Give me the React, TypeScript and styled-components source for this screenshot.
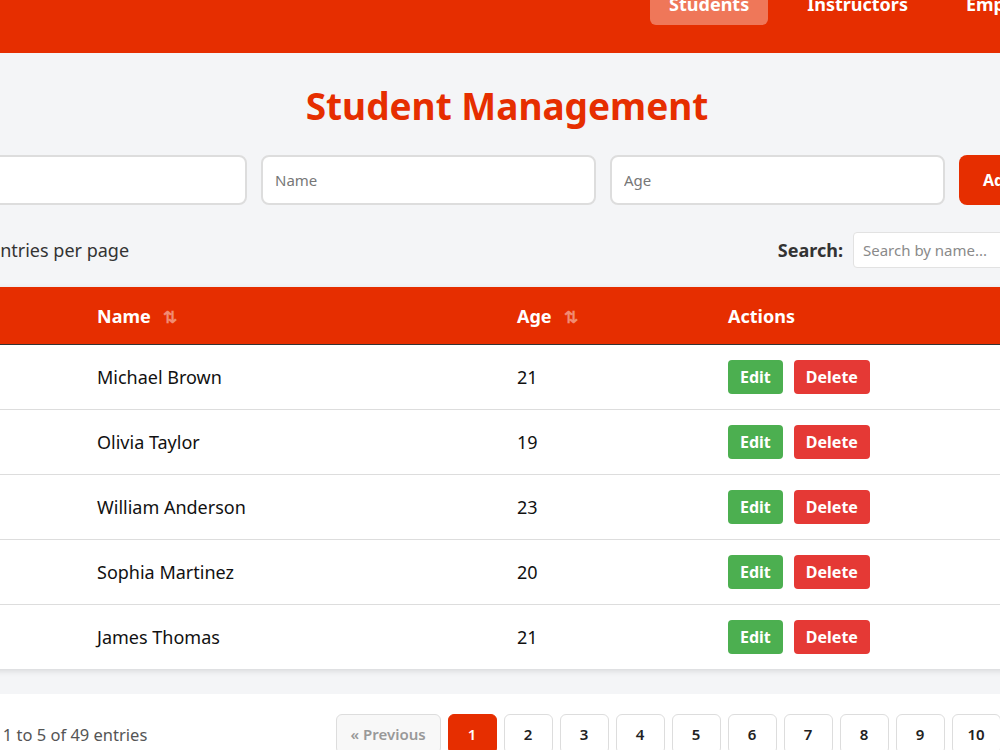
import React from 'react';
import styled, { createGlobalStyle } from 'styled-components';

const RED = '#e62e00';

const students = [
	{ id: 6, name: 'Michael Brown', age: 21 },
	{ id: 7, name: 'Olivia Taylor', age: 19 },
	{ id: 8, name: 'William Anderson', age: 23 },
	{ id: 9, name: 'Sophia Martinez', age: 20 },
	{ id: 10, name: 'James Thomas', age: 21 },
];

const pages = [1, 2, 3, 4, 5, 6, 7, 8, 9, 10];

const App = () => {
	return (
		<Viewport>
			<GlobalStyle />
			<Page>
				<NavBar>
					<NavLinks>
						<NavLink $active>Students</NavLink>
						<NavLink>Instructors</NavLink>
						<NavLink>Employees</NavLink>
					</NavLinks>
				</NavBar>
				<Content>
					<Title>Student Management</Title>
					<FormRow>
						<Input placeholder="ID" />
						<Input placeholder="Name" />
						<Input placeholder="Age" />
						<AddButton>Add Student</AddButton>
					</FormRow>
					<Toolbar>
						<Entries>
							<EntrySelect>
								<option>5</option>
							</EntrySelect>
							entries per page
						</Entries>
						<SearchBox>
							<SearchLabel>Search:</SearchLabel>
							<SearchInput placeholder="Search by name..." />
						</SearchBox>
					</Toolbar>
					<TableCard>
						<Table>
							<colgroup>
								<col style={{ width: 169 }} />
								<col style={{ width: 420 }} />
								<col style={{ width: 211 }} />
								<col />
							</colgroup>
							<thead>
								<tr>
									<Th>
										ID <SortIcon>⇅</SortIcon>
									</Th>
									<Th>
										Name <SortIcon>⇅</SortIcon>
									</Th>
									<Th>
										Age <SortIcon>⇅</SortIcon>
									</Th>
									<Th>Actions</Th>
								</tr>
							</thead>
							<tbody>
								{students.map((s) => (
									<tr key={s.id}>
										<Td>{s.id}</Td>
										<Td>{s.name}</Td>
										<Td>{s.age}</Td>
										<Td>
											<Actions>
												<SmallButton $color="#4caf50">Edit</SmallButton>
												<SmallButton $color="#e53935">Delete</SmallButton>
											</Actions>
										</Td>
									</tr>
								))}
							</tbody>
						</Table>
					</TableCard>
					<FooterCard>
						<Showing>Showing 1 to 5 of 49 entries</Showing>
						<Pagination>
							<PageButton $disabled $wide>
								« Previous
							</PageButton>
							{pages.map((p) => (
								<PageButton key={p} $active={p === 1}>
									{p}
								</PageButton>
							))}
							<PageButton $wide>Next »</PageButton>
						</Pagination>
					</FooterCard>
				</Content>
			</Page>
		</Viewport>
	);
};

export default App;

// styles
const GlobalStyle = createGlobalStyle`
	* {
		box-sizing: border-box;
	}
	body {
		margin: 0;
		font-family: 'Segoe UI', 'Noto Sans', 'Open Sans', sans-serif;
		background: #f4f5f7;
	}
`;

const Viewport = styled.div`
	width: 100vw;
	height: 100vh;
	overflow: hidden;
	background: #f4f5f7;
`;

// the page is wider than the window and shown scrolled
const Page = styled.div`
	width: 1290px;
	margin: -46px 0 0 -138px;
	display: flex;
	flex-direction: column;
`;

const NavBar = styled.nav`
	height: 99px;
	background: ${RED};
	display: flex;
	align-items: center;
	justify-content: flex-end;
	padding: 0 71px 0 50px;
`;

const NavLinks = styled.div`
	display: flex;
	gap: 20px;
`;

const NavLink = styled.a<{ $active?: boolean }>`
	padding: 10px 19px;
	border-radius: 6px;
	color: #fff;
	font-size: 18px;
	font-weight: 700;
	line-height: 22px;
	background: ${(p) => (p.$active ? 'rgba(255, 255, 255, 0.35)' : 'transparent')};
`;

const Content = styled.main`
	padding: 0 50px;
	display: flex;
	flex-direction: column;
`;

const Title = styled.h1`
	margin: 29px 0 25px;
	text-align: center;
	color: ${RED};
	font-size: 37px;
	line-height: 48px;
	font-weight: 700;
`;

const FormRow = styled.div`
	display: grid;
	grid-template-columns: 335px 335px 335px 1fr;
	gap: 14px;
`;

const Input = styled.input`
	height: 50px;
	padding: 0 12px;
	border: 2px solid #dddddd;
	border-radius: 8px;
	background: #fff;
	font-family: inherit;
	font-size: 15px;
	color: #333;
	outline: none;

	&::placeholder {
		color: #777;
	}
`;

const AddButton = styled.button`
	height: 50px;
	border: none;
	border-radius: 8px;
	background: ${RED};
	color: #fff;
	font-family: inherit;
	font-size: 16px;
	font-weight: 700;
	text-align: left;
	white-space: nowrap;
	padding: 0 24px;
`;

const Toolbar = styled.div`
	margin-top: 27px;
	display: flex;
	align-items: center;
	justify-content: space-between;
	height: 36px;
`;

const Entries = styled.div`
	display: flex;
	align-items: center;
	gap: 8px;
	font-size: 18px;
	color: #333;
`;

const EntrySelect = styled.select`
	width: 70px;
	height: 36px;
	padding: 0 8px;
	border: 1px solid #ddd;
	border-radius: 4px;
	background: #fff;
	font-size: 16px;
`;

const SearchBox = styled.div`
	display: flex;
	align-items: center;
	gap: 10px;
`;

const SearchLabel = styled.span`
	font-size: 18px;
	font-weight: 700;
	color: #333;
`;

const SearchInput = styled.input`
	width: 249px;
	height: 36px;
	padding: 0 9px;
	border: 1px solid #e2e2e2;
	border-radius: 4px;
	background: #fff;
	font-family: inherit;
	font-size: 15px;
	outline: none;

	&::placeholder {
		color: #8a8a8a;
	}
`;

const TableCard = styled.div`
	margin-top: 19px;
	background: #fff;
	box-shadow: 0 2px 6px rgba(0, 0, 0, 0.12);
`;

const Table = styled.table`
	width: 100%;
	border-collapse: collapse;
	table-layout: fixed;
`;

const Th = styled.th`
	height: 57px;
	padding: 1px 16px 0;
	background: ${RED};
	color: #fff;
	font-size: 18px;
	font-weight: 700;
	text-align: left;
	border-bottom: 1px solid #333;
`;

const SortIcon = styled.span`
	margin-left: 8px;
	font-size: 17px;
	opacity: 0.45;
`;

const Td = styled.td`
	height: 65px;
	padding: 0 16px;
	font-size: 18px;
	color: #111;
	border-bottom: 1px solid #dddddd;

	tr:last-child & {
		border-bottom: none;
	}
`;

const Actions = styled.div`
	display: flex;
	gap: 11px;
`;

const SmallButton = styled.button<{ $color: string }>`
	height: 34px;
	padding: 0 12px;
	border: none;
	border-radius: 4px;
	background: ${(p) => p.$color};
	color: #fff;
	font-family: inherit;
	font-size: 16px;
	font-weight: 700;
`;

const FooterCard = styled.div`
	margin-top: 25px;
	background: #fff;
	padding: 20px 17px 20px 20px;
	display: flex;
	align-items: center;
	justify-content: space-between;
`;

const Showing = styled.span`
	font-size: 16.5px;
	color: #555;
`;

const Pagination = styled.div`
	display: flex;
	gap: 7px;
`;

const PageButton = styled.button<{ $active?: boolean; $disabled?: boolean; $wide?: boolean }>`
	height: 40px;
	min-width: 49px;
	padding: 0 ${(p) => (p.$wide ? '14px' : '0')};
	border: 1px solid ${(p) => (p.$active ? RED : '#dddddd')};
	border-radius: 6px;
	background: ${(p) => (p.$active ? RED : p.$disabled ? '#f8f8f8' : '#fff')};
	color: ${(p) => (p.$active ? '#fff' : p.$disabled ? '#999' : '#222')};
	font-family: inherit;
	font-size: 15px;
	font-weight: 600;
`;
